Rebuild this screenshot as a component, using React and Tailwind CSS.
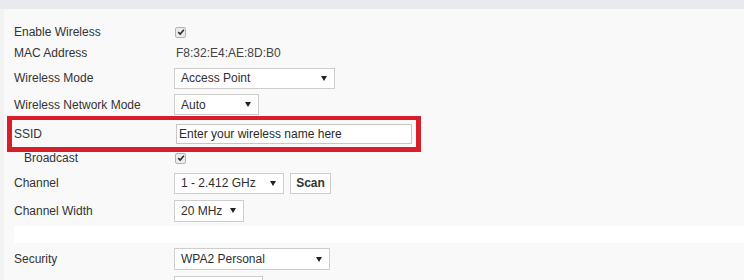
const FONT = { fontFamily: '"Liberation Sans", Arial, sans-serif' }

function Check() {
  return (
    <span className="ml-[1px] flex h-[11px] w-[11px] items-center justify-center rounded-[2px] border border-[#b4b4b4] bg-[#ececec]">
      <svg viewBox="0 0 10 10" className="h-[8px] w-[8px]">
        <path d="M1.5 5.2 L4 7.6 L8.6 2.2" fill="none" stroke="#2b2b2b" strokeWidth="1.9" />
      </svg>
    </span>
  )
}

function Select({ value, width, height = 'h-[21px]' }) {
  return (
    <div
      className={`flex ${height} items-center justify-between border border-[#cdcdcd] bg-white pl-[6px] pr-[7px] text-[12px] text-[#2f2f2f]`}
      style={{ width }}
    >
      <span>{value}</span>
      <svg viewBox="0 0 6 5" className="h-[5px] w-[6px]">
        <path d="M0 0 H6 L3 5 Z" fill="#222" />
      </svg>
    </div>
  )
}

function Row({ label, className = '', indent, children }) {
  return (
    <div className={`flex items-center ${className}`}>
      <div className={`w-[160px] text-[12px] text-[#333] ${indent ? 'pl-[10px]' : ''}`}>{label}</div>
      <div className="flex items-center gap-[6px]">{children}</div>
    </div>
  )
}

export default function App() {
  return (
    <div className="flex h-[280px] w-[744px] flex-col overflow-hidden bg-[#f9f9f9] leading-none" style={FONT}>
      <div className="h-[9px] shrink-0 bg-[#e8eaed]" />
      <div className="flex flex-1">
        <div className="w-[4px] shrink-0 bg-[#f2f2f2]" />
        <div className="flex flex-1 flex-col pl-[10px] pt-[12px]">
          <Row label="Enable Wireless" className="h-[22px]">
            <Check />
          </Row>
          <Row label="MAC Address" className="h-[20px]">
            <span className="ml-[2px] text-[12px] text-[#444]">F8:32:E4:AE:8D:B0</span>
          </Row>
          <Row label="Wireless Mode" className="h-[30px]">
            <Select value="Access Point" width={161} />
          </Row>
          <Row label="Wireless Network Mode" className="h-[23px]">
            <Select value="Auto" width={85} />
          </Row>
          <div className="ml-[-7px] flex h-[36px] w-[414px] items-center border-[5px] border-t-[4px] border-[#d61f2a] pl-[2px]">
            <div className="w-[162px] text-[12px] text-[#333]">SSID</div>
            <div className="flex h-[20px] w-[236px] items-center border border-[#c6c6c6] bg-white pl-[2px] text-[12px] text-[#2a2a2a]">
              Enter your wireless name here
            </div>
          </div>
          <Row label="Broadcast" indent className="h-[12px]">
            <Check />
          </Row>
          <Row label="Channel" className="mt-[6px] h-[26px]">
            <Select value="1 - 2.412 GHz" width={110} />
            <button
              type="button"
              className="flex h-[21px] w-[41px] items-center justify-center border border-[#cdcdcd] bg-white text-[12px] font-bold text-[#333]"
            >
              Scan
            </button>
          </Row>
          <Row label="Channel Width" className="h-[29px]">
            <Select value="20 MHz" width={70} height="h-[22px]" />
          </Row>
          <div className="mt-[1px] h-[17px] bg-white" />
          <Row label="Security" className="h-[32px]">
            <Select value="WPA2 Personal" width={156} height="h-[22px]" />
          </Row>
          <Row label="" className="mt-[1px] items-start">
            <Select value="" width={89} height="h-[22px]" />
          </Row>
        </div>
      </div>
    </div>
  )
}
